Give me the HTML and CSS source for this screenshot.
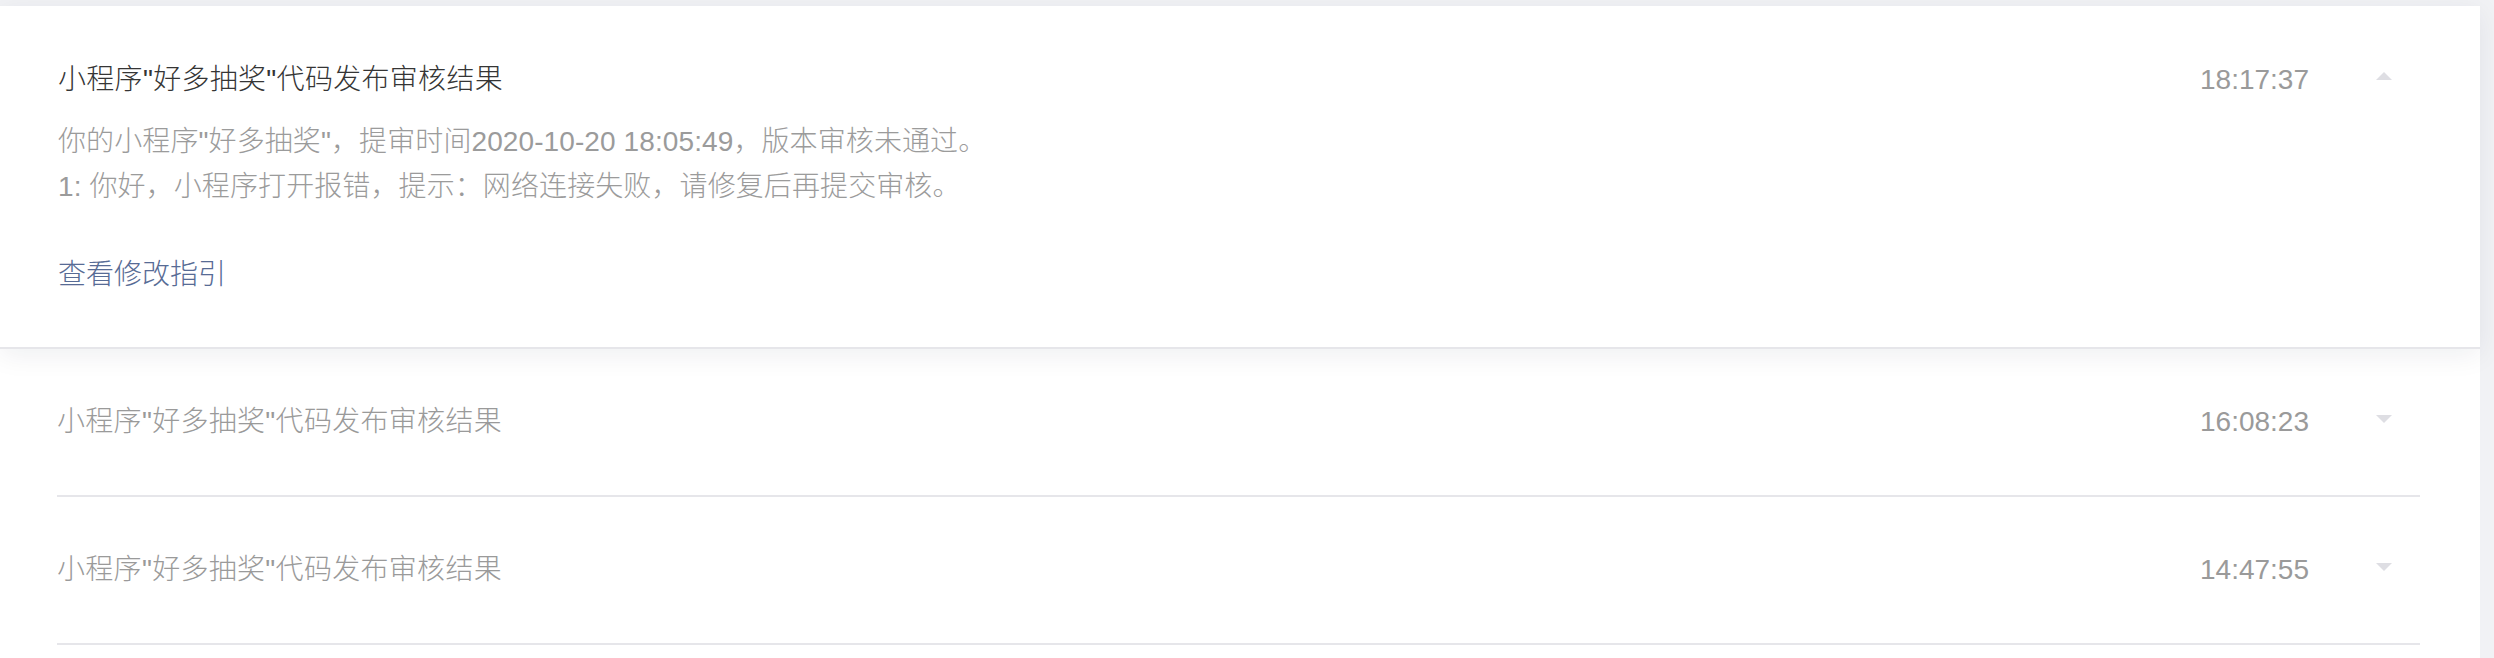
FILE: index.html
```html
<!DOCTYPE html>
<html lang="zh-CN">
<head>
<meta charset="utf-8">
<title>审核结果</title>
<link rel="stylesheet" href="styles.css">
</head>
<body>
<div class="page">
  <div class="list">
    <div class="item item-open">
      <div class="item-head">
        <div class="item-title">小程序"好多抽奖"代码发布审核结果</div>
        <div class="item-time">18:17:37</div>
        <span class="arrow arrow-up"></span>
      </div>
      <div class="item-body">
        <p class="line">你的小程序"好多抽奖"，提审时间2020-10-20 18:05:49，版本审核未通过。</p>
        <p class="line">1: 你好，小程序打开报错，提示：网络连接失败，请修复后再提交审核。</p>
      </div>
      <a class="guide-link" href="#">查看修改指引</a>
    </div>
    <div class="item item-closed">
      <div class="item-title">小程序"好多抽奖"代码发布审核结果</div>
      <div class="item-time">16:08:23</div>
      <span class="arrow arrow-down"></span>
    </div>
    <div class="item item-closed">
      <div class="item-title">小程序"好多抽奖"代码发布审核结果</div>
      <div class="item-time">14:47:55</div>
      <span class="arrow arrow-down"></span>
    </div>
  </div>
</div>
</body>
</html>
```
FILE: styles.css
```css
html, body {
  margin: 0;
  padding: 0;
}
body {
  background: #f1f2f5;
  font-family: "Liberation Sans", "Noto Sans CJK SC", sans-serif;
  font-size: 28px;
  font-weight: 300;
  height: 658px;
  overflow: hidden;
}
.page {
  padding: 6px 14px 0 0;
}
.list {
  background: #ffffff;
  height: 652px;
}
.item-open {
  position: relative;
  background: #ffffff;
  padding: 54px 88px 52px 58px;
  border-bottom: 2px solid #e6e6ea;
  box-shadow: 0 6px 26px rgba(20, 30, 60, 0.07);
}
.item-head {
  display: flex;
  align-items: center;
  height: 40px;
}
.item-title {
  flex: 1;
  line-height: 40px;
  color: #9a9a9a;
  letter-spacing: 0.3px;
  white-space: nowrap;
}
.item-open .item-title {
  color: #353535;
}
.item-time {
  width: 108px;
  line-height: 40px;
  color: #9a9a9a;
  white-space: nowrap;
}
.arrow {
  width: 0;
  height: 0;
  margin-left: 68px;
  border-left: 8px solid transparent;
  border-right: 8px solid transparent;
}
.arrow-up {
  border-bottom: 8px solid #dedee3;
  margin-top: -9px;
}
.arrow-down {
  border-top: 8px solid #dedee3;
  margin-top: -7px;
  margin-right: 28px;
}
.item-body {
  margin-top: 19px;
}
.line {
  margin: 0;
  line-height: 45px;
  color: #9b9b9b;
  letter-spacing: 0.1px;
}
.guide-link {
  display: block;
  margin-top: 46px;
  line-height: 40px;
  color: #576b95;
  text-decoration: none;
}
.item-closed {
  display: flex;
  align-items: center;
  height: 146px;
  margin: 0 60px 0 57px;
  border-bottom: 2px solid #e6e6ea;
}
```
